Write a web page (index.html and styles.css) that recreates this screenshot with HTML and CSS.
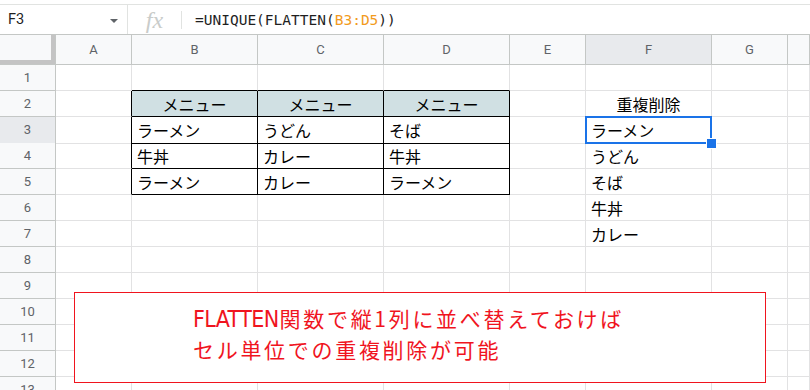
FILE: index.html
```html
<!DOCTYPE html>
<html>
  <head>
    <meta charset="utf-8">
    <title>FLATTEN</title>
    <link rel="stylesheet" href="styles.css">
  </head>
  <body>
    <!-- 数式バー -->
    <div class="bar">
      <div class="namebox"><span>F3</span><span class="caret"></span></div>
      <div class="fx"><span>fx</span></div>
      <span class="sep"></span>
      <div class="formula">=UNIQUE(FLATTEN(<span class="ref">B3:D5</span>))</div>
    </div>
    <!-- シート -->
    <div class="sheet">
      <div class="row head">
        <div class="corner"></div>
        <div>A</div><div>B</div><div>C</div><div>D</div><div>E</div><div class="on">F</div><div>G</div><div></div>
      </div>
      <div class="row">
        <div class="num">1</div>
        <div></div><div class="tb"></div><div class="tb"></div><div class="tb"></div><div></div><div></div><div></div><div></div>
      </div>
      <div class="row">
        <div class="num">2</div>
        <div class="tr"></div>
        <div class="t th">メニュー</div>
        <div class="t th">メニュー</div>
        <div class="t th">メニュー</div>
        <div></div>
        <div class="c">重複削除</div>
        <div></div><div></div>
      </div>
      <div class="row">
        <div class="num on">3</div>
        <div class="tr"></div>
        <div class="t">ラーメン</div>
        <div class="t">うどん</div>
        <div class="t">そば</div>
        <div></div>
        <div class="sel">ラーメン</div>
        <div></div><div></div>
      </div>
      <div class="row">
        <div class="num">4</div>
        <div class="tr"></div>
        <div class="t">牛丼</div>
        <div class="t">カレー</div>
        <div class="t">牛丼</div>
        <div></div>
        <div>うどん</div>
        <div></div><div></div>
      </div>
      <div class="row">
        <div class="num">5</div>
        <div class="tr"></div>
        <div class="t">ラーメン</div>
        <div class="t">カレー</div>
        <div class="t">ラーメン</div>
        <div></div>
        <div>そば</div>
        <div></div><div></div>
      </div>
      <div class="row">
        <div class="num">6</div>
        <div></div><div></div><div></div><div></div><div></div>
        <div>牛丼</div>
        <div></div><div></div>
      </div>
      <div class="row">
        <div class="num">7</div>
        <div></div><div></div><div></div><div></div><div></div>
        <div>カレー</div>
        <div></div><div></div>
      </div>
      <div class="row">
        <div class="num">8</div>
        <div></div><div></div><div></div><div></div><div></div><div></div><div></div><div></div>
      </div>
      <div class="row">
        <div class="num">9</div>
        <div></div><div></div><div></div><div></div><div></div><div></div><div></div><div></div>
      </div>
      <div class="row">
        <div class="num">10</div>
        <div></div><div></div><div></div><div></div><div></div><div></div><div></div><div></div>
      </div>
      <div class="row">
        <div class="num">11</div>
        <div></div><div></div><div></div><div></div><div></div><div></div><div></div><div></div>
      </div>
      <div class="row">
        <div class="num">12</div>
        <div></div><div></div><div></div><div></div><div></div><div></div><div></div><div></div>
      </div>
      <div class="row">
        <div class="num">13</div>
        <div></div><div></div><div></div><div></div><div></div><div></div><div></div><div></div>
      </div>
      <!-- 図形（テキストボックス） -->
      <div class="note">
        <p><span class="en">FLATTEN</span>関数で縦1列に並べ替えておけば</p>
        <p>セル単位での重複削除が可能</p>
      </div>
    </div>
  </body>
</html>
```

FILE: styles.css
```css
* {
  box-sizing: border-box;
}
body {
  margin: 0;
  width: 810px;
  height: 390px;
  overflow: hidden;
  background: #fff;
  font-family: Roboto, "Noto Sans CJK JP", sans-serif;
}
/* -------- 数式バー ------------- */
.bar {
  display: flex;
  align-items: center;
  margin-top: 4px;
  height: 30px;
  border-top: 1px solid #e1e3e1;
}
.namebox {
  display: flex;
  align-items: center;
  justify-content: space-between;
  width: 128px;
  height: 100%;
  padding: 0 9px 0 8px;
  border-right: 1px solid #e1e3e1;
  font-size: 14.5px;
  color: #1f1f1f;
}
.caret {
  width: 0;
  height: 0;
  border-left: 4px solid transparent;
  border-right: 4px solid transparent;
  border-top: 4px solid #5f6368;
  margin-top: 2px;
}
.fx {
  width: 53px;
  text-align: center;
  font-family: "Liberation Serif", serif;
  font-style: italic;
  font-size: 24px;
  color: #c9ccca;
  line-height: 28px;
}
.sep {
  width: 1px;
  height: 18px;
  background: #e1e3e1;
}
.formula {
  padding-left: 13px;
  font-family: "DejaVu Sans Mono", monospace;
  font-size: 14.5px;
  color: #1f1f1f;
}
.ref {
  color: #f29b1d;
}
/* -------- シート ------------- */
.sheet {
  position: relative;
}
.row {
  display: grid;
  grid-template-columns: 56px 76px 126px 126px 126px 76px 126px 76px 1fr;
  height: 26px;
}
.row > div {
  border-right: 1px solid #e2e2e3;
  border-bottom: 1px solid #e2e2e3;
  padding: 0 5px;
  font-family: "Noto Sans CJK JP", sans-serif;
  font-size: 16px;
  line-height: 26px;
  color: #000;
  white-space: nowrap;
  overflow: hidden;
}
.row.head {
  height: 31px;
}
.row.head > div {
  background: #f8f9fa;
  border-top: 1px solid #c4c7c5;
  border-right-color: #c4c7c5;
  border-bottom-color: #c4c7c5;
  font-family: Roboto, sans-serif;
  font-size: 13px;
  line-height: 29px;
  color: #5f6368;
  text-align: center;
}
.row.head > .corner {
  box-shadow: inset -4px -4px 0 #c4c4c4;
}
.row > .num {
  background: #f8f9fa;
  border-right-color: #c4c7c5;
  border-bottom-color: #c4c7c5;
  font-family: Roboto, sans-serif;
  font-size: 13px;
  line-height: 25px;
  color: #5f6368;
  text-align: center;
}
.row > .on,
.row.head > .on {
  background: #e8eaed;
}
.c {
  text-align: center;
}
/* 表の罫線 */
.row > .t {
  border-right-color: #000;
  border-bottom-color: #000;
}
.row > .tr {
  border-right-color: #000;
}
.row > .tb {
  border-bottom-color: #000;
}
.row > .th {
  background: #d0e0e3;
  text-align: center;
}
/* 選択セル */
.row > .sel {
  position: relative;
  overflow: visible;
}
.sel::before {
  content: '';
  position: absolute;
  top: -1px;
  left: -1px;
  right: -1px;
  bottom: -1px;
  border: 2px solid #1a73e8;
}
.sel::after {
  content: '';
  position: absolute;
  right: -6px;
  bottom: -6px;
  width: 9px;
  height: 9px;
  background: #1a73e8;
  border: 1px solid #fff;
  z-index: 1;
}
/* -------- テキストボックス ------------- */
.note {
  position: absolute;
  top: 258px;
  left: 74px;
  width: 692px;
  height: 91px;
  border: 1px solid #f0141e;
  background: #fff;
  padding: 10px 0 0 118px;
  color: #f0141e;
  font-family: "Noto Sans CJK JP", sans-serif;
  font-size: 21px;
  letter-spacing: 2.7px;
  line-height: 30px;
}
.note p {
  margin: 0;
}
.note .en {
  font-family: "DejaVu Sans", sans-serif;
  font-stretch: condensed;
  font-size: 23px;
  letter-spacing: -0.6px;
  margin-right: 1px;
}
```
